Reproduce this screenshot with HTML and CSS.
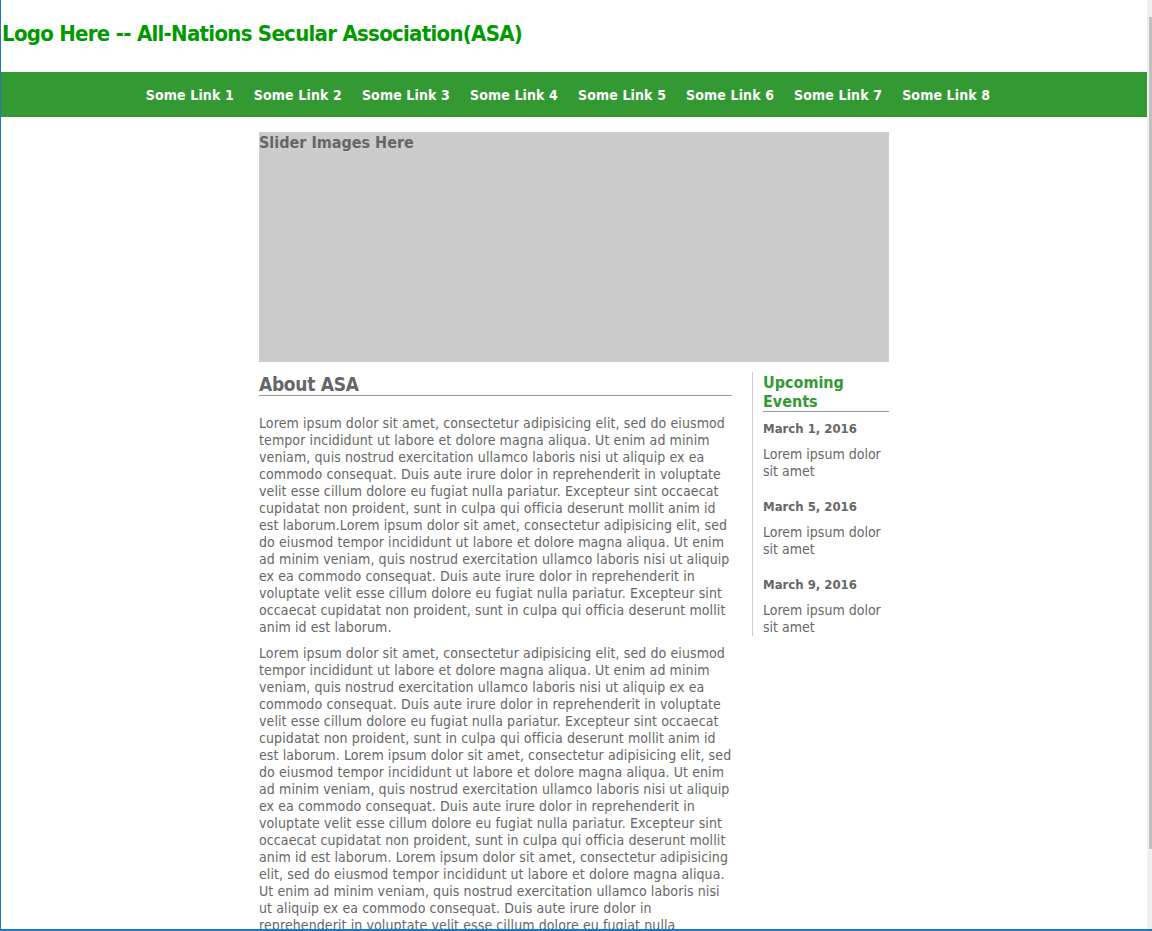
FILE: index.html
```html
<!DOCTYPE html>
<html lang="en">
<head>
<meta charset="utf-8">
<title>All-Nations Secular Association</title>
<link rel="stylesheet" href="styles.css">
</head>
<body>
<div class="frame">
  <div class="page">
    <header class="site-header">
      <h1 class="logo">Logo Here -- All-Nations Secular Association(ASA)</h1>
    </header>
    <nav class="main-nav">
      <a href="#">Some Link 1</a>
      <a href="#">Some Link 2</a>
      <a href="#">Some Link 3</a>
      <a href="#">Some Link 4</a>
      <a href="#">Some Link 5</a>
      <a href="#">Some Link 6</a>
      <a href="#">Some Link 7</a>
      <a href="#">Some Link 8</a>
    </nav>
    <div class="container">
      <div class="slider">Slider Images Here</div>
      <div class="columns">
        <main class="main-col">
          <h2 class="section-title">About ASA</h2>
          <p>Lorem ipsum dolor sit amet, consectetur adipisicing elit, sed do eiusmod tempor incididunt ut labore et dolore magna aliqua. Ut enim ad minim veniam, quis nostrud exercitation ullamco laboris nisi ut aliquip ex ea commodo consequat. Duis aute irure dolor in reprehenderit in voluptate velit esse cillum dolore eu fugiat nulla pariatur. Excepteur sint occaecat cupidatat non proident, sunt in culpa qui officia deserunt mollit anim id est laborum.Lorem ipsum dolor sit amet, consectetur adipisicing elit, sed do eiusmod tempor incididunt ut labore et dolore magna aliqua. Ut enim ad minim veniam, quis nostrud exercitation ullamco laboris nisi ut aliquip ex ea commodo consequat. Duis aute irure dolor in reprehenderit in voluptate velit esse cillum dolore eu fugiat nulla pariatur. Excepteur sint occaecat cupidatat non proident, sunt in culpa qui officia deserunt mollit anim id est laborum.</p>
          <p>Lorem ipsum dolor sit amet, consectetur adipisicing elit, sed do eiusmod tempor incididunt ut labore et dolore magna aliqua. Ut enim ad minim veniam, quis nostrud exercitation ullamco laboris nisi ut aliquip ex ea commodo consequat. Duis aute irure dolor in reprehenderit in voluptate velit esse cillum dolore eu fugiat nulla pariatur. Excepteur sint occaecat cupidatat non proident, sunt in culpa qui officia deserunt mollit anim id est laborum. Lorem ipsum dolor sit amet, consectetur adipisicing elit, sed do eiusmod tempor incididunt ut labore et dolore magna aliqua. Ut enim ad minim veniam, quis nostrud exercitation ullamco laboris nisi ut aliquip ex ea commodo consequat. Duis aute irure dolor in reprehenderit in voluptate velit esse cillum dolore eu fugiat nulla pariatur. Excepteur sint occaecat cupidatat non proident, sunt in culpa qui officia deserunt mollit anim id est laborum. Lorem ipsum dolor sit amet, consectetur adipisicing elit, sed do eiusmod tempor incididunt ut labore et dolore magna aliqua. Ut enim ad minim veniam, quis nostrud exercitation ullamco laboris nisi ut aliquip ex ea commodo consequat. Duis aute irure dolor in reprehenderit in voluptate velit esse cillum dolore eu fugiat nulla pariatur. Excepteur sint occaecat cupidatat non proident, sunt in culpa qui officia deserunt mollit anim id est laborum.</p>
        </main>
        <aside class="sidebar">
          <h3 class="sidebar-title">Upcoming Events</h3>
          <div class="event">
            <h4 class="event-date">March 1, 2016</h4>
            <p class="event-text">Lorem ipsum dolor sit amet</p>
          </div>
          <div class="event">
            <h4 class="event-date">March 5, 2016</h4>
            <p class="event-text">Lorem ipsum dolor sit amet</p>
          </div>
          <div class="event">
            <h4 class="event-date">March 9, 2016</h4>
            <p class="event-text">Lorem ipsum dolor sit amet</p>
          </div>
        </aside>
      </div>
    </div>
  </div>
  <div class="scrollbar"><div class="scroll-thumb"></div></div>
</div>
</body>
</html>
```
FILE: styles.css
```css
html, body {
  margin: 0;
  padding: 0;
  height: 931px;
  overflow: hidden;
  background: #ffffff;
}

body {
  font-family: Tahoma, "DejaVu Sans Condensed", "DejaVu Sans", sans-serif;
  font-size: 14px;
  color: #666666;
}

.frame {
  display: flex;
  height: 931px;
  box-sizing: border-box;
  border-left: 1px solid #1b76cc;
  border-bottom: 2px solid #1b76cc;
  overflow: hidden;
}

.page {
  flex: 0 0 1146px;
  width: 1146px;
  overflow: hidden;
}

.site-header {
  height: 72px;
  display: flex;
  align-items: center;
  padding-left: 1px;
  box-sizing: border-box;
  padding-bottom: 6px;
}

.logo {
  margin: 0;
  font-size: 22px;
  line-height: 27px;
  font-weight: bold;
  letter-spacing: -0.72px;
  color: #009900;
}

.main-nav {
  height: 45px;
  background: #339933;
  display: flex;
  align-items: center;
  justify-content: center;
  gap: 20px;
  padding-right: 12px;
}

.main-nav a {
  color: #ffffff;
  font-weight: bold;
  font-size: 14px;
  letter-spacing: 0.13px;
  text-decoration: none;
}

.container {
  width: 630px;
  margin: 15px auto 0;
}

.slider {
  height: 230px;
  box-sizing: border-box;
  padding-top: 1px;
  background: #cccccc;
  font-size: 16px;
  font-weight: bold;
  line-height: 20px;
  color: #666666;
}

.columns {
  display: flex;
  align-items: flex-start;
  gap: 20px;
  margin-top: 10px;
}

.main-col {
  width: 473px;
  flex: 0 0 473px;
}

.section-title {
  margin: 0;
  padding-top: 1px;
  font-size: 19px;
  line-height: 22px;
  font-weight: bold;
  letter-spacing: -0.3px;
  color: #666666;
  border-bottom: 1px solid #999999;
}

.main-col p {
  margin: 19px 0 0;
  line-height: 17px;
  letter-spacing: 0.1px;
}

.main-col p + p {
  margin-top: 9px;
}

.sidebar {
  width: 126px;
  flex: 0 0 126px;
  border-left: 1px solid #cccccc;
  padding-left: 10px;
}

.sidebar-title {
  margin: 0;
  padding-top: 1px;
  font-size: 16px;
  line-height: 19px;
  font-weight: bold;
  color: #339933;
  border-bottom: 1px solid #999999;
}

.event-date {
  margin: 9px 0;
  font-size: 13px;
  line-height: 16px;
  font-weight: bold;
  color: #666666;
}

.event-text {
  margin: 0 0 19px;
  line-height: 17px;
}

.event:last-child .event-text {
  margin-bottom: 0;
}

.scrollbar {
  flex: 1 1 auto;
  background: #f0f0f0;
  position: relative;
}

.scroll-thumb {
  position: absolute;
  top: 17px;
  left: 2px;
  right: 0;
  height: 832px;
  background: #c1c1c1;
}
```
